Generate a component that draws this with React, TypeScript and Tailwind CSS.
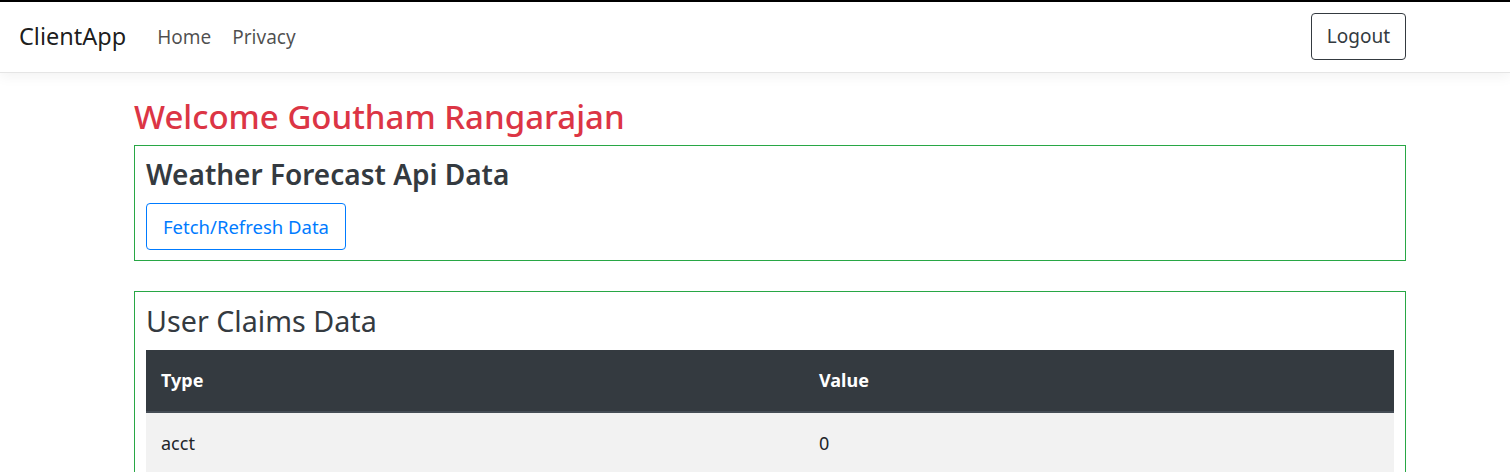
const claims = [{ type: "acct", value: "0" }];

export default function App() {
  return (
    <div className="min-h-screen bg-white text-[#212529] font-['Noto_Sans',sans-serif]">
      <nav className="border-t-2 border-black border-b border-b-[#e5e5e5] bg-white shadow-[0_4px_12px_rgba(0,0,0,0.05)]">
        <div className="flex h-[70px] items-center pl-[19px] pr-[104px]">
          <a className="text-[23.5px] text-black/90">ClientApp</a>
          <div className="ml-[31px] flex gap-[21px] text-[19px] text-black/70">
            <a>Home</a>
            <a>Privacy</a>
          </div>
          <button className="ml-auto mb-[2px] h-[47px] rounded border border-[#343a40] px-[15px] text-[19px] text-[#343a40]">
            Logout
          </button>
        </div>
      </nav>

      <main className="ml-[134px] w-[1272px] pt-[24px]">
        <h1 className="mb-[8px] text-[33px] leading-[1.2] font-medium text-[#dc3545]">
          Welcome Goutham Rangarajan
        </h1>

        <section className="border border-[#28a745] px-[11px] pt-[12px] pb-[10px]">
          <h3 className="mb-[12px] text-[28px] leading-[1.2] font-semibold text-[#343a40]">
            Weather Forecast Api Data
          </h3>
          <button className="h-[47px] rounded border border-[#007bff] px-[16px] text-[18.5px] text-[#007bff]">
            Fetch/Refresh Data
          </button>
        </section>

        <section className="mt-[30px] border border-[#28a745] px-[11px] pt-[12px]">
          <h3 className="mb-[11px] text-[28.7px] leading-[1.2] font-normal text-[#343a40]">
            User Claims Data
          </h3>
          <table className="w-full border-collapse text-left text-[18px]">
            <thead>
              <tr className="bg-[#343a40] text-white">
                <th className="w-[658px] border-b-2 border-[#454d55] px-[15px] py-[17px] font-bold">Type</th>
                <th className="border-b-2 border-[#454d55] px-[15px] py-[17px] font-bold">Value</th>
              </tr>
            </thead>
            <tbody>
              {claims.map((c) => (
                <tr key={c.type} className="bg-[#f2f2f2]">
                  <td className="px-[15px] py-[17px]">{c.type}</td>
                  <td className="px-[15px] py-[17px]">{c.value}</td>
                </tr>
              ))}
            </tbody>
          </table>
        </section>
      </main>
    </div>
  );
}
